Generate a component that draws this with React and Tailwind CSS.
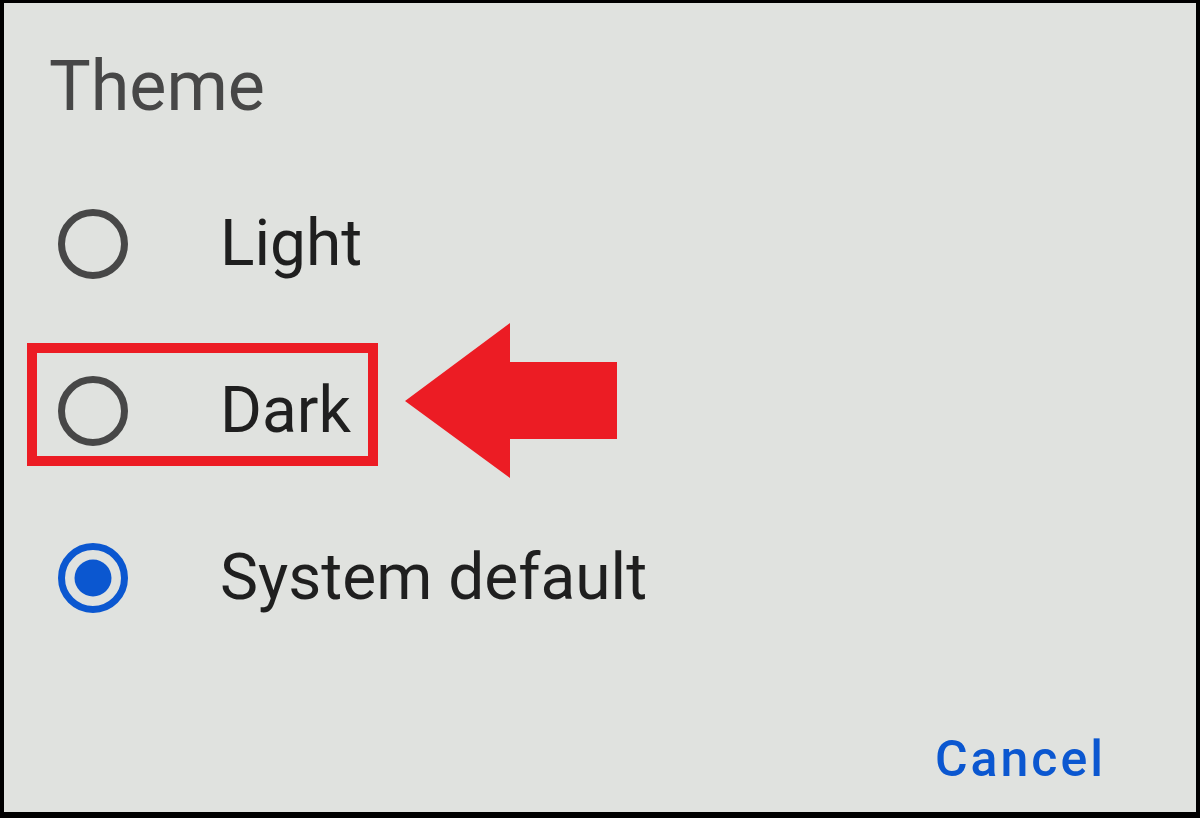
import React from 'react'

const font = { fontFamily: 'Roboto, "Noto Sans", sans-serif' }

function Radio({ checked }) {
  if (checked) {
    return (
      <svg width="70" height="70" viewBox="0 0 70 70" className="shrink-0">
        <circle cx="35" cy="35" r="31.5" fill="none" stroke="#0b57d0" strokeWidth="7" />
        <circle cx="35" cy="35" r="18.5" fill="#0b57d0" />
      </svg>
    )
  }
  return (
    <svg width="70" height="70" viewBox="0 0 70 70" className="shrink-0">
      <circle cx="35" cy="35" r="31.5" fill="none" stroke="#474747" strokeWidth="7" />
    </svg>
  )
}

function Option({ label, checked }) {
  return (
    <div className="flex h-[167px] items-center">
      <div className="flex w-[216px] justify-start pl-[54px]">
        <Radio checked={checked} />
      </div>
      <span className="text-[64px] leading-none text-[#1f1f1f]">{label}</span>
    </div>
  )
}

export default function App() {
  return (
    <div
      style={font}
      className="relative h-[818px] w-[1200px] overflow-hidden border-t-[3px] border-r-4 border-b-[6px] border-l-4 border-black bg-[#e0e2df]"
    >
      <div className="h-[157px] pl-[45px] pt-[43px]">
        <h1 className="text-[70px] leading-[80px] font-normal text-[#474747]">Theme</h1>
      </div>

      <Option label="Light" />
      <Option label="Dark" />
      <Option label="System default" checked />

      <div className="mt-[68px] flex justify-end pr-[90px]">
        <button className="text-[50px] leading-[60px] font-medium tracking-[0.06em] text-[#0b57d0]">Cancel</button>
      </div>

      {/* annotation: highlight box */}
      <div className="absolute top-[340px] left-[23px] h-[123px] w-[351px] border-[10px] border-[#ec1c24]" />

      {/* annotation: arrow */}
      <svg className="absolute top-0 left-0" width="1200" height="818" viewBox="0 0 1200 818">
        <polygon
          points="401,398 506,320 506,359 613,359 613,436 506,436 506,475"
          fill="#ec1c24"
        />
      </svg>
    </div>
  )
}
